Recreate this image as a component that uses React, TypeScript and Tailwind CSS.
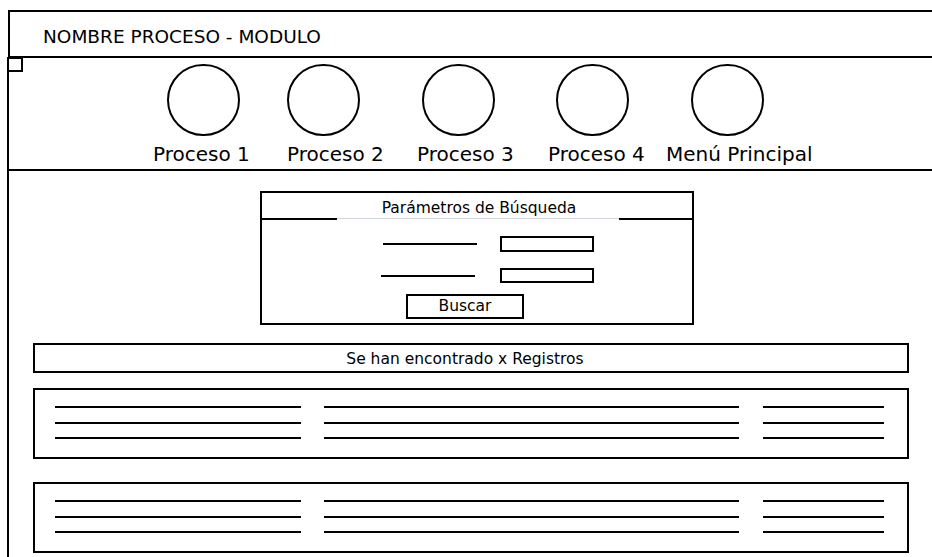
import React from 'react';

// Wireframe: process module search screen

const circles = [
  { key: 'c1', className: 'ml-0' },
  { key: 'c2', className: 'ml-[47px]' },
  { key: 'c3', className: 'ml-[62px]' },
  { key: 'c4', className: 'ml-[61px]' },
  { key: 'c5', className: 'ml-[62px]' },
];

const navLabels = [
  { label: 'Proceso 1', className: 'w-[134px]' },
  { label: 'Proceso 2', className: 'w-[130px]' },
  { label: 'Proceso 3', className: 'w-[131px]' },
  { label: 'Proceso 4', className: 'w-[118px]' },
  { label: 'Menú Principal', className: 'w-[160px]' },
];

const Lines: React.FC<{ className: string }> = ({ className }) => (
  <div className={`flex flex-col gap-[13.5px] ${className}`}>
    <div className="h-[2px] bg-black" />
    <div className="h-[2px] bg-black" />
    <div className="h-[2px] bg-black" />
  </div>
);

const RecordCard: React.FC<{ className?: string }> = ({ className = '' }) => (
  <div className={`ml-[24px] w-[876px] h-[71px] shrink-0 border-2 border-black flex pl-[20px] pr-[23px] pt-[16px] gap-[23px] ${className}`}>
    <Lines className="w-[246px]" />
    <Lines className="flex-1" />
    <Lines className="w-[121px] ml-px" />
  </div>
);

export default function App() {
  return (
    <div className="w-[932px] h-[557px] overflow-hidden bg-white text-black font-['DejaVu_Sans',sans-serif] flex flex-col">
      {/* Header */}
      <header className="ml-[8px] mt-[10px] h-[48px] shrink-0 border-t-2 border-b-2 border-l-2 border-black pl-[33px] pt-[14px]">
        <div className="text-[18.5px] leading-[22px] whitespace-nowrap">NOMBRE PROCESO - MODULO</div>
      </header>

      <div className="ml-[7px] flex-1 border-l-2 border-black flex flex-col">
        {/* Process navigation */}
        <nav className="relative border-b-2 border-black pt-[6px] pb-[3px]">
          <div className="absolute left-[-2px] top-[-1px] w-[16px] h-[15px] border-2 border-black bg-white" />
          <div className="flex pl-[158px]">
            {circles.map((c) => (
              <div key={c.key} className={`w-[73px] h-[72px] rounded-full border-2 border-black ${c.className}`} />
            ))}
          </div>
          <div className="flex pl-[144px] mt-[6px] text-[20px] leading-[24px] whitespace-nowrap">
            {navLabels.map((n) => (
              <span key={n.label} className={n.className}>
                {n.label}
              </span>
            ))}
          </div>
        </nav>

        {/* Search parameters */}
        <section className="ml-[251px] mt-[20px] w-[434px] shrink-0 border-2 border-black text-[15.5px]">
          <div className="h-[25px] pt-[5px] leading-[20px] text-center pl-[4px]">Parámetros de Búsqueda</div>
          <div className="flex items-start h-[2px]">
            <div className="w-[75px] h-[2px] bg-black" />
            <div className="flex-1 h-px bg-gray-300" />
            <div className="w-[73px] h-[2px] bg-black" />
          </div>
          <div className="flex items-center mt-[16px] pl-[121px]">
            <div className="w-[94px] h-[2px] bg-black" />
            <div className="ml-[23px] w-[94px] h-[16px] border-2 border-black" />
          </div>
          <div className="flex items-center mt-[16px] pl-[119px]">
            <div className="w-[94px] h-[2px] bg-black" />
            <div className="ml-[25px] w-[94px] h-[15px] border-2 border-black" />
          </div>
          <div className="mt-[11px] mb-[4px] ml-[144px] w-[118px] h-[25px] border-2 border-black text-center leading-[21px]">
            Buscar
          </div>
        </section>

        {/* Results */}
        <div className="ml-[24px] mt-[18px] w-[876px] h-[30px] shrink-0 border-2 border-black text-[15.5px] leading-[24px] pt-[2px] text-center pr-[12px]">
          Se han encontrado x Registros
        </div>

        <RecordCard className="mt-[15px]" />
        <RecordCard className="mt-[23px]" />
      </div>
    </div>
  );
}
